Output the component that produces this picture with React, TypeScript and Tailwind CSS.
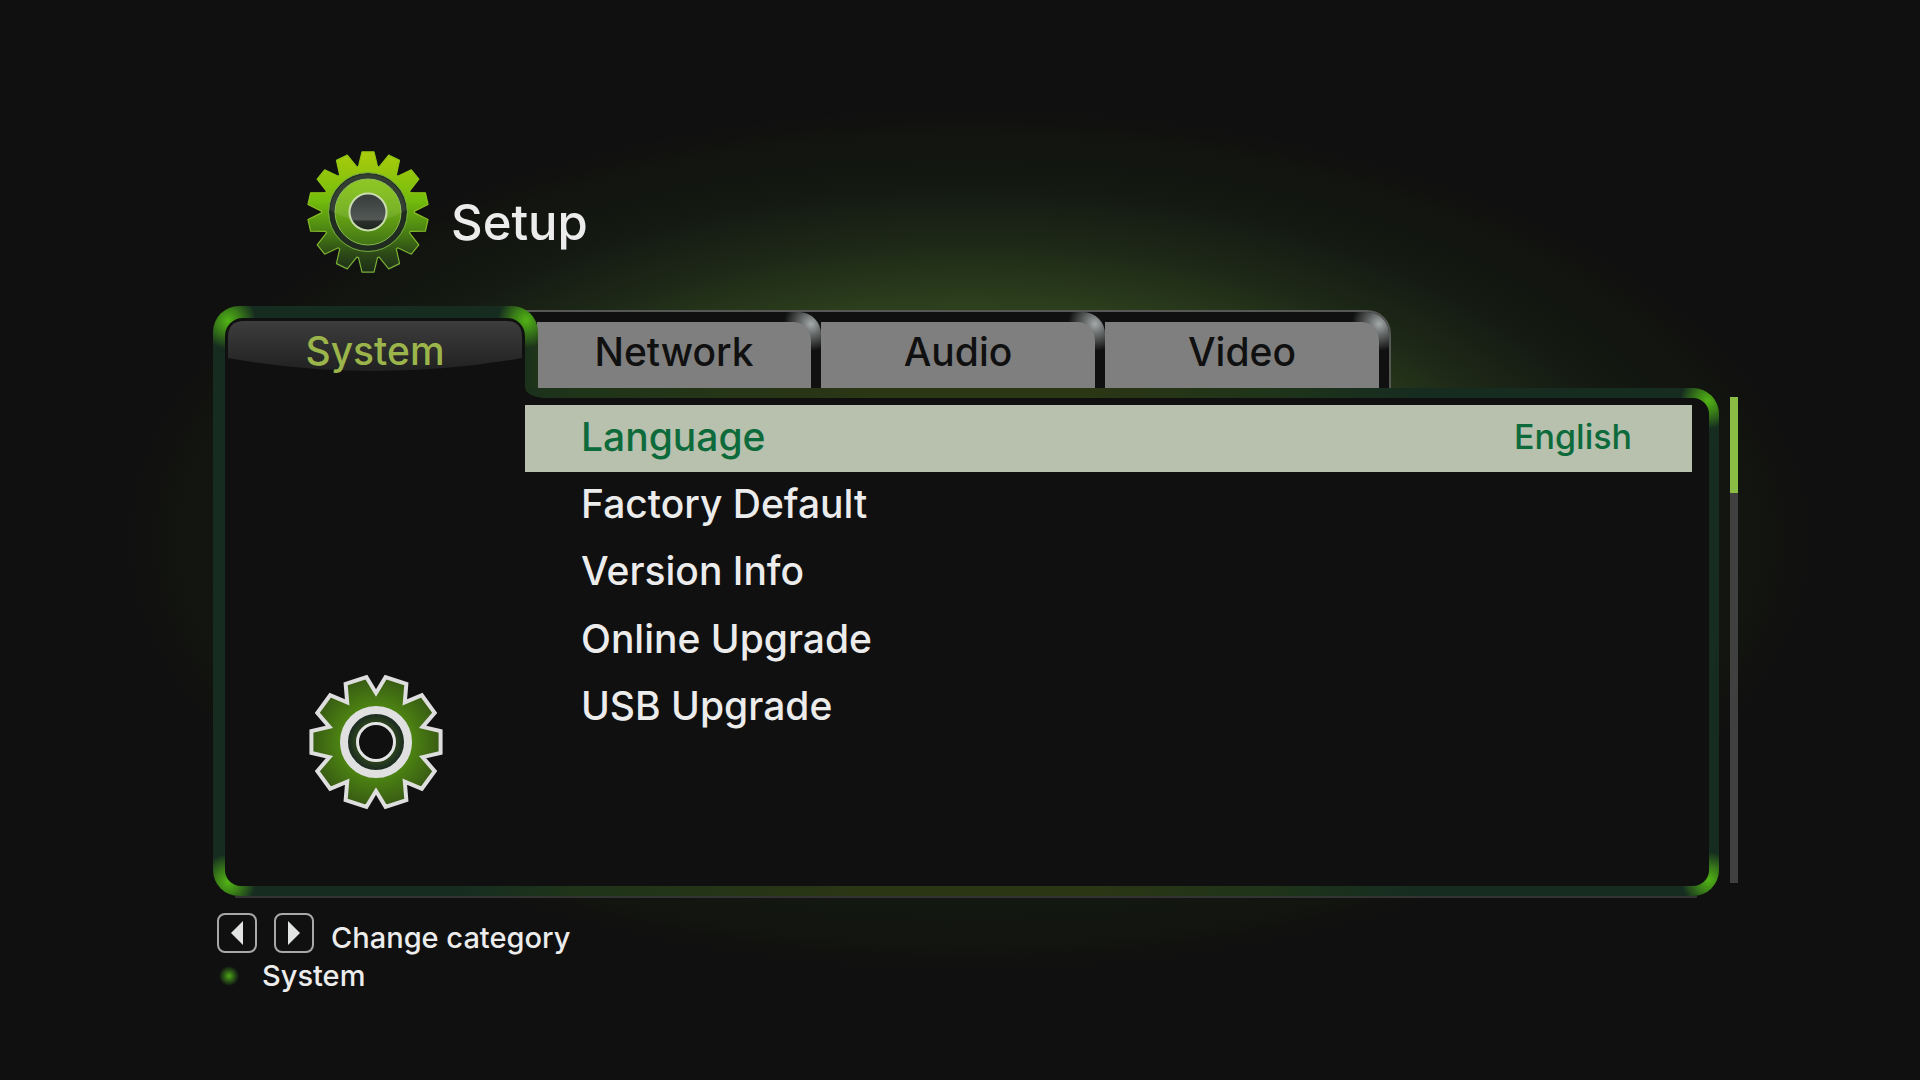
import { useState } from 'react';
import clsx from 'clsx';

const tabs = ['Network', 'Audio', 'Video'];

const options = [
  { name: 'Language', value: 'English' },
  { name: 'Factory Default' },
  { name: 'Version Info' },
  { name: 'Online Upgrade' },
  { name: 'USB Upgrade' },
];

// Points are [angle in degrees, radius], repeated once per tooth
function gearPath(teeth: number, points: number[][]) {
  const out: string[] = [];
  for (let i = 0; i < teeth; i++) {
    for (const [deg, r] of points) {
      const a = ((i * 360) / teeth + deg) * (Math.PI / 180);
      out.push(`${(r * Math.sin(a)).toFixed(2)} ${(-r * Math.cos(a)).toFixed(2)}`);
    }
  }
  return `M${out.join('L')}Z`;
}

const setupGear = gearPath(14, [[-11.8, 46.5], [-5.7, 60.5], [5.7, 60.5], [11.8, 46.5]]);
const systemGear = gearPath(10, [[0, 49], [8.4, 65.5], [27.6, 65.5]]);

function SetupGear() {
  return (
    <svg viewBox="-62 -62 124 124" className="size-[124px]" aria-hidden="true">
      <defs>
        <linearGradient id="teeth" x1="0" y1="0" x2="0" y2="1">
          <stop offset="0" stopColor="#abcc0c" />
          <stop offset="0.4" stopColor="#74bd0c" />
          <stop offset="0.65" stopColor="#4b8413" />
          <stop offset="0.85" stopColor="#2c4817" />
          <stop offset="1" stopColor="#1d2c18" />
        </linearGradient>
        <linearGradient id="edge" x1="0" y1="0" x2="0" y2="1">
          <stop offset="0.3" stopColor="#8fc512" />
          <stop offset="1" stopColor="#77ac3a" />
        </linearGradient>
        <linearGradient id="disc" x1="0" y1="0" x2="0" y2="1">
          <stop offset="0" stopColor="#86c50d" />
          <stop offset="0.45" stopColor="#6fae13" />
          <stop offset="1" stopColor="#3d7016" />
        </linearGradient>
        <linearGradient id="hub" x1="0" y1="0" x2="0" y2="1">
          <stop offset="0" stopColor="#353b39" />
          <stop offset="0.7" stopColor="#535856" />
          <stop offset="0.75" stopColor="#2b302c" />
          <stop offset="1" stopColor="#1b211b" />
        </linearGradient>
        <clipPath id="gloss">
          <circle r="38" />
        </clipPath>
      </defs>
      <path d={setupGear} fill="url(#teeth)" stroke="url(#edge)" strokeWidth="1.2" strokeLinejoin="round" />
      <circle r="36" fill="url(#disc)" stroke="#202c20" strokeWidth="6" />
      <circle r="39.5" fill="none" stroke="#76a843" strokeWidth="1" />
      <circle r="33" fill="none" stroke="#86b84c" strokeWidth="1" />
      <path d="M-40 -3Q0 22 40 -3V-40H-40Z" fill="#fff" fillOpacity="0.09" clipPath="url(#gloss)" />
      <circle r="18.5" fill="url(#hub)" stroke="#c9dcae" strokeWidth="2" />
    </svg>
  );
}

function SystemGear() {
  return (
    <svg viewBox="-69 -69 138 138" className="size-[138px]" aria-hidden="true">
      <defs>
        <radialGradient id="body" gradientUnits="userSpaceOnUse" cx="0" cy="0" r="66">
          <stop offset="0.55" stopColor="#4c8212" />
          <stop offset="1" stopColor="#375913" />
        </radialGradient>
        <radialGradient id="well">
          <stop offset="0.65" stopColor="#29401c" />
          <stop offset="1" stopColor="#141e25" />
        </radialGradient>
      </defs>
      <path d={systemGear} fill="url(#body)" stroke="#dedede" strokeWidth="4" />
      <circle r="32" fill="url(#well)" stroke="#e0e0e0" strokeWidth="8" />
      <circle r="18.5" fill="#101010" stroke="#e4e4e4" strokeWidth="3" />
    </svg>
  );
}

function ArrowButton({ label, points }: { label: string; points: string }) {
  return (
    <button
      type="button"
      aria-label={label}
      className="flex size-10 items-center justify-center rounded-lg border-2 border-[#a6a9a8]"
    >
      <svg viewBox="0 0 12 24" className="h-6 w-3" aria-hidden="true">
        <polygon points={points} fill="#e2e5e4" />
      </svg>
    </button>
  );
}

function TabBar({ active, onSelect }: { active: string; onSelect: (name: string) => void }) {
  return (
    <div role="tablist" className="flex items-end font-medium">
      <button
        type="button"
        role="tab"
        aria-selected={active === 'System'}
        onClick={() => onSelect('System')}
        className="relative z-10 h-[82px] w-[325px] rounded-t-[26px] bg-[radial-gradient(circle_at_15px_15px,#52b315_0,#3a7f18_12px,transparent_28px),radial-gradient(circle_at_313px_14px,#52b315_0,#3a7f18_12px,transparent_28px),linear-gradient(90deg,#162c20_0%,#162c20_90%,#1f3419_100%)] pt-3 pr-[13px] pl-3"
      >
        <span className="relative flex h-[70px] items-center justify-center rounded-t-[18px] bg-[#101010] pb-1 text-[39px] leading-[44px] text-[#9bb54b]">
          <svg
            viewBox="0 0 294 50"
            preserveAspectRatio="none"
            className="absolute inset-x-[3px] top-[3px] h-[50px] w-[294px]"
            aria-hidden="true"
          >
            <defs>
              <linearGradient id="shine" x1="0" y1="0" x2="0" y2="1">
                <stop offset="0" stopColor="#3d3d3d" />
                <stop offset="1" stopColor="#212121" />
              </linearGradient>
            </defs>
            <path d="M0 37V16Q0 0 16 0H278Q294 0 294 16V37Q147 63 0 37Z" fill="url(#shine)" />
          </svg>
          <span className="relative">System</span>
        </span>
      </button>
      <div className="-ml-5 flex h-[78px] rounded-tr-[24px] border-t-2 border-r-2 border-[#565856] bg-[#101010] pl-[19px]">
        {tabs.map((name) => (
          <button
            key={name}
            type="button"
            role="tab"
            aria-selected={active === name}
            onClick={() => onSelect(name)}
            className="h-full w-[284px] rounded-tr-[22px] bg-[radial-gradient(circle_at_274px_12px,#a3a8a8_0,#6b6e6e_10px,transparent_27px)] pt-[10px] pr-[10px]"
          >
            <span className="flex h-full items-center justify-center rounded-tr-[18px] bg-[#7f7f7f] pb-[6px] text-[39px] leading-[44px] text-[#101010]">
              {name}
            </span>
          </button>
        ))}
      </div>
    </div>
  );
}

export default function App() {
  const [active, setActive] = useState('System');
  const [selected, setSelected] = useState('Language');

  return (
    <main className="min-h-screen bg-[#101010] bg-[radial-gradient(ellipse_44%_40%_at_50.5%_50%,#3c5a1e_0%,#344b1e_45%,#2b3d1c_56%,#1d2817_69%,#141912_82%,#12140f_94%,#101010_100%)] pt-[150px] pr-[182px] pb-20 pl-[213px] font-['Inter',sans-serif] text-[#ececec]">
      <header className="flex h-[156px] items-start gap-[21px] pl-[93px]">
        <SetupGear />
        <h1 className="pt-[45px] text-[49px] leading-[56px] font-medium">Setup</h1>
      </header>

      <TabBar active={active} onSelect={setActive} />

      <div className="flex gap-[11px]">
        <div className="min-w-0 flex-1">
          {/* Glowing frame */}
          <div className="flex h-[508px] rounded-tr-[26px] rounded-b-[26px] bg-[radial-gradient(circle_at_calc(100%-11px)_13px,#52b315_0,#3a7f18_12px,transparent_28px),radial-gradient(circle_at_15px_calc(100%-14px),#52b315_0,#3a7f18_12px,transparent_28px),radial-gradient(circle_at_calc(100%-10px)_calc(100%-16px),#52b315_0,#3a7f18_12px,transparent_28px),linear-gradient(90deg,#162c20_0%,#162c20_16%,#1f3419_24%,#2b3614_44%,#2b3614_58%,#1f3419_70%,#162c20_80%)] pr-[10px] pb-[10px] pl-3">
            <aside className="flex w-[300px] items-end justify-center rounded-bl-[16px] bg-[#101010] pb-[75px] pl-[2px]">
              <SystemGear />
            </aside>
            <section role="tabpanel" aria-label={active} className="flex min-w-0 flex-1 flex-col">
              {/* Inner corner where the tab meets the frame */}
              <div className="h-[10px] w-5 bg-[radial-gradient(ellipse_20px_10px_at_100%_0,transparent_96%,#101010_100%)]" />
              <div className="flex-1 rounded-r-[16px] bg-[#101010] pt-[7px] pr-[17px]">
                <ul className="grid h-[337px] grid-rows-5">
                  {options.map(({ name, value }) => (
                    <li key={name}>
                      <button
                        type="button"
                        onClick={() => setSelected(name)}
                        className={clsx(
                          'flex h-full w-full items-center justify-between pr-[60px] pb-1 pl-[56px] text-[39px] leading-[44px] font-medium',
                          selected === name && 'bg-[#b8c0ae] text-[#0d6b3b]'
                        )}
                      >
                        <span>{name}</span>
                        {value && <span className="text-[34px]">{value}</span>}
                      </button>
                    </li>
                  ))}
                </ul>
              </div>
            </section>
          </div>
          <div className="mx-[22px] h-[2px] bg-[#333333]" />
        </div>

        {/* Scrollbar */}
        <div className="mt-[9px] h-[486px] w-2 bg-[#404040]">
          <div className="h-24 bg-[#8bbd45]" />
        </div>
      </div>

      <footer className="pt-[15px] pl-1 text-[29px] leading-[38px] font-medium">
        <div className="flex items-start">
          <div className="flex gap-[17px]">
            <ArrowButton label="Previous category" points="12,0 0,12 12,24" />
            <ArrowButton label="Next category" points="0,0 12,12 0,24" />
          </div>
          <p className="pt-[6px] pl-[17px]">Change category</p>
        </div>
        <div className="flex items-center">
          <span className="size-6 bg-[radial-gradient(circle,#4fa818_0,#2c5a17_5px,transparent_10px)]" />
          <p className="pl-[21px]">{active}</p>
        </div>
      </footer>
    </main>
  );
}
